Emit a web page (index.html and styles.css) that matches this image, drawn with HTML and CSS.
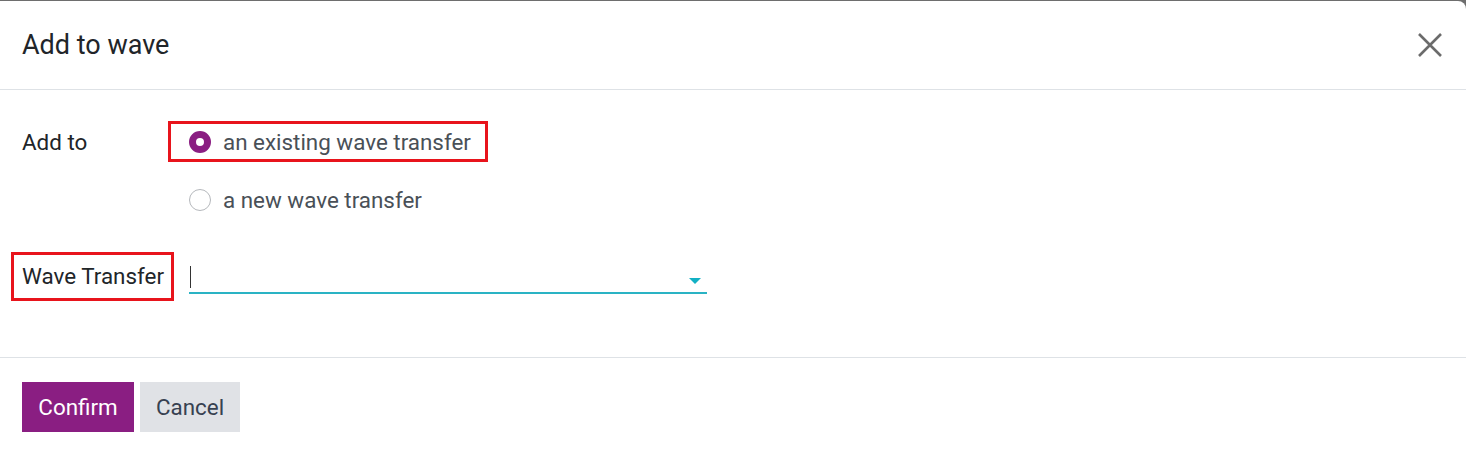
FILE: index.html
```html
<!DOCTYPE html>
<html>
<head>
<meta charset="utf-8">
<link rel="stylesheet" href="styles.css">
</head>
<body>
<div class="modal">
  <header class="modal-header">
    <h4 class="modal-title">Add to wave</h4>
    <button class="close" aria-label="Close">
      <svg width="26" height="26" viewBox="0 0 26 26"><path d="M2 2 L24 24 M24 2 L2 24" stroke="#6b6b6b" stroke-width="2.6" fill="none"/></svg>
    </button>
  </header>
  <main class="modal-body">
    <div class="row row-radio">
      <div class="label"><span>Add to</span></div>
      <div class="radios">
        <label class="radio highlight"><span class="dot checked"></span><span class="rtext">an existing wave transfer</span></label>
        <label class="radio"><span class="dot"></span><span class="rtext">a new wave transfer</span></label>
      </div>
    </div>
    <div class="row row-field">
      <div class="label"><span class="hl-label">Wave Transfer</span></div>
      <div class="field">
        <span class="caret"></span>
        <span class="arrow"></span>
      </div>
    </div>
  </main>
  <footer class="modal-footer">
    <button class="btn btn-primary">Confirm</button>
    <button class="btn btn-secondary">Cancel</button>
  </footer>
</div>
</body>
</html>
```
FILE: styles.css
```css
html, body { margin: 0; padding: 0; }
body {
  background: #6e6e6e;
  font-family: Roboto, "Liberation Sans", sans-serif;
  width: 1466px;
  height: 456px;
  overflow: hidden;
}
.modal {
  margin-top: 1px;
  height: 455px;
  background: #fff;
  border-top-right-radius: 8px;
  display: flex;
  flex-direction: column;
}
.modal-header {
  height: 88px;
  border-bottom: 1px solid #dee2e6;
  display: flex;
  align-items: center;
  justify-content: space-between;
  padding: 0 23px 0 22px;
  flex: none;
}
.modal-title {
  margin: 0;
  font-weight: 400;
  font-size: 27px;
  color: #212529;
}
.close {
  border: 0;
  background: none;
  padding: 0;
  width: 26px;
  height: 26px;
  display: flex;
}
.modal-body {
  height: 268px;
  flex: none;
  padding: 0 22px;
  box-sizing: border-box;
  border-bottom: 1px solid #dee2e6;
}
.row { display: flex; }
.row-radio { padding-top: 31px; }
.label {
  width: 167px;
  font-size: 22.4px;
  color: #212529;
  flex: none;
}
.row-radio .label { padding-top: 8px; }
.radios { display: flex; flex-direction: column; gap: 17px; }
.radio {
  display: flex;
  align-items: center;
  height: 41px;
  padding: 0 14px 0 18px;
  margin-left: -21px;
  box-sizing: border-box;
  font-size: 22.4px;
  color: #495057;
  border: 3px solid transparent;
  width: max-content;
}
.radio.highlight { border-color: #e8141c; }
.dot {
  width: 22px;
  height: 22px;
  border: 1px solid #b5b8bc;
  border-radius: 50%;
  box-sizing: border-box;
  margin-right: 12px;
  flex: none;
}
.dot.checked {
  border: 7px solid #8a1e82;
  background: #fff;
}
.row-field { padding-top: 32px; align-items: flex-start; }
.hl-label {
  display: inline-block;
  border: 3px solid #e8141c;
  padding: 8px 7px 9px 8px;
  margin-left: -11px;
  line-height: 26px;
}
.field {
  position: relative;
  width: 518px;
  height: 34px;
  box-sizing: border-box;
  border-bottom: 2px solid #2ab3c4;
  margin-top: 8px;
}
.caret {
  position: absolute;
  left: 1px;
  top: 6px;
  width: 1px;
  height: 22px;
  background: #333;
}
.arrow {
  position: absolute;
  right: 6px;
  top: 18px;
  border-left: 6px solid transparent;
  border-right: 6px solid transparent;
  border-top: 6px solid #12b0c4;
}
.modal-footer {
  padding: 24px 22px;
  display: flex;
  gap: 6px;
}
.btn {
  border: 0;
  height: 50px;
  font-family: Roboto, "Liberation Sans", sans-serif;
  font-size: 22.4px;
  padding: 0;
}
.btn-primary { background: #8a1e82; color: #fff; width: 112px; }
.btn-secondary { background: #e0e2e6; color: #374151; width: 100px; }
```
